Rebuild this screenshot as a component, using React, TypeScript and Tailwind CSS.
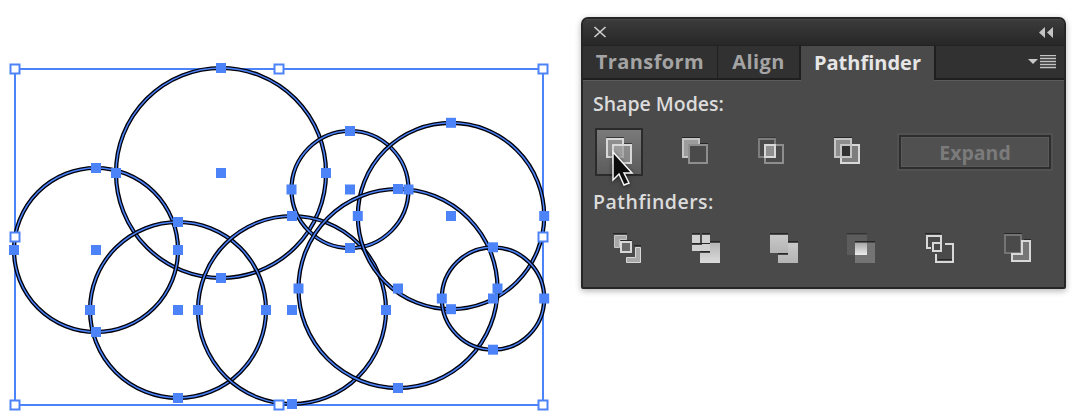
const BLUE = "#4d83f8";

const circles = [
  { cx: 221, cy: 173, r: 105 },
  { cx: 96, cy: 250, r: 82 },
  { cx: 178, cy: 310, r: 88 },
  { cx: 292, cy: 310, r: 94 },
  { cx: 350, cy: 189.5, r: 58.5 },
  { cx: 451, cy: 216, r: 93.2 },
  { cx: 398, cy: 288.5, r: 99.5 },
  { cx: 493, cy: 298.5, r: 51.2 },
];

const handles = [
  [15, 69],
  [279, 69],
  [543, 69],
  [15, 237],
  [543, 237],
  [15, 405],
  [279, 405],
  [543, 405],
];

// artwork on the left: selected circles with their bounding box
const Artboard = () => (
  <svg width="581" height="419" viewBox="0 0 581 419" className="shrink-0">
    <rect x="15" y="69" width="528" height="336" fill="none" stroke={BLUE} strokeWidth="2" />
    {circles.map((c, i) => (
      <g key={i} fill="none">
        <circle cx={c.cx} cy={c.cy} r={c.r} stroke="#000008" strokeWidth="4.2" />
        <circle cx={c.cx} cy={c.cy} r={c.r} stroke={BLUE} strokeWidth="1.5" />
      </g>
    ))}
    {circles.map((c, i) => (
      <g key={i} fill={BLUE}>
        <rect x={c.cx - 5} y={c.cy - 5} width="10" height="10" />
        <rect x={c.cx - 5} y={c.cy - c.r - 5} width="10" height="10" />
        <rect x={c.cx - 5} y={c.cy + c.r - 5} width="10" height="10" />
        <rect x={c.cx - c.r - 5} y={c.cy - 5} width="10" height="10" />
        <rect x={c.cx + c.r - 5} y={c.cy - 5} width="10" height="10" />
      </g>
    ))}
    {handles.map(([x, y], i) => (
      <rect key={i} x={x - 4.5} y={y - 4.5} width="9" height="9" fill="#fff" stroke={BLUE} strokeWidth="2" />
    ))}
  </svg>
);

const Icon = ({ children }: { children: React.ReactNode }) => (
  <svg width="30" height="32" viewBox="0 0 30 32">
    {children}
  </svg>
);

const LIGHT = "#d8d8d8";
const DARK = "#262626";

const UniteIcon = () => (
  <Icon>
    <rect x="2" y="1" width="18" height="1" fill="#3a3a3a" />
    <rect x="3" y="3" width="16" height="18" fill="#8f8f8f" stroke={LIGHT} strokeWidth="2" />
    <rect x="20" y="7" width="8" height="1" fill="#3a3a3a" />
    <rect x="9" y="9" width="18" height="18" fill="#989898" fillOpacity="0.7" stroke={LIGHT} strokeWidth="2" />
    <path d="M10 10h8v10h-8z" fill="#9c9c9c" />
  </Icon>
);

const MinusFrontIcon = () => (
  <Icon>
    <rect x="2" y="1" width="18" height="1" fill={DARK} />
    <rect x="3" y="3" width="16" height="18" fill="#9c9c9c" stroke="#c4c4c4" strokeWidth="2" />
    <rect x="20" y="7" width="8" height="1" fill={DARK} />
    <rect x="9" y="9" width="18" height="18" fill="#4a4a4a" stroke="#8e8e8e" strokeWidth="2" />
  </Icon>
);

const IntersectIcon = () => (
  <Icon>
    <rect x="2" y="1" width="18" height="1" fill="#3a3a3a" />
    <rect x="3" y="3" width="16" height="18" fill="none" stroke="#7d7d7d" strokeWidth="2" />
    <rect x="9" y="9" width="18" height="18" fill="none" stroke="#8e8e8e" strokeWidth="2" />
    <rect x="9" y="9" width="10" height="12" fill="#8f8f8f" stroke={LIGHT} strokeWidth="2" />
  </Icon>
);

const ExcludeIcon = () => (
  <Icon>
    <rect x="2" y="1" width="18" height="1" fill={DARK} />
    <rect x="3" y="3" width="16" height="18" fill="#8d8d8d" stroke="#c4c4c4" strokeWidth="2" />
    <rect x="9" y="9" width="18" height="18" fill="#7d7d7d" stroke={LIGHT} strokeWidth="2" />
    <rect x="9" y="9" width="10" height="12" fill="#303030" stroke="#c4c4c4" strokeWidth="2" />
  </Icon>
);

const DivideIcon = () => (
  <Icon>
    <rect x="1" y="1" width="14" height="1" fill={DARK} />
    <path d="M2.500 15.500V3.500h12v4H7.500v8z" fill="#a8a8a8" stroke="#c8c8c8" strokeWidth="1" />
    <rect x="9" y="8" width="11" height="1" fill={DARK} />
    <rect x="9" y="10" width="10" height="10" fill="#6a6a6a" stroke={LIGHT} strokeWidth="2" />
    <rect x="22" y="13" width="7" height="1" fill={DARK} />
    <path d="M23.500 15.500h5v15h-14v-5h9z" fill="#a8a8a8" stroke={LIGHT} strokeWidth="1" />
  </Icon>
);

const TrimIcon = () => (
  <Icon>
    <defs>
      <linearGradient id="trim" x1="0" y1="0" x2="0" y2="1">
        <stop offset="0" stopColor="#b4b4b4" />
        <stop offset="1" stopColor="#dcdcdc" />
      </linearGradient>
    </defs>
    <rect x="2" y="1" width="8" height="1" fill={DARK} />
    <rect x="12" y="1" width="8" height="1" fill={DARK} />
    <rect x="2" y="3" width="8" height="8" fill="#d0d0d0" />
    <rect x="12" y="3" width="8" height="16" fill="#d0d0d0" />
    <rect x="2" y="11" width="18" height="1" fill={DARK} />
    <rect x="2" y="13" width="18" height="6" fill="#d0d0d0" />
    <rect x="10" y="19" width="10" height="1" fill={DARK} />
    <rect x="20" y="9" width="10" height="1" fill={DARK} />
    <path d="M20 11h10v20H10V21h10z" fill="url(#trim)" />
  </Icon>
);

const MergeIcon = () => (
  <Icon>
    <defs>
      <linearGradient id="merge" x1="0" y1="0" x2="0" y2="1">
        <stop offset="0" stopColor="#c8c8c8" />
        <stop offset="1" stopColor="#b4b4b4" />
      </linearGradient>
    </defs>
    <rect x="2" y="1" width="18" height="1" fill={DARK} />
    <rect x="2" y="3" width="18" height="18" fill="url(#merge)" />
    <rect x="20" y="9" width="10" height="1" fill={DARK} />
    <rect x="10" y="21" width="10" height="1" fill={DARK} />
    <path d="M20 11h10v20H10V23h10z" fill="url(#merge)" />
  </Icon>
);

const CropIcon = () => (
  <Icon>
    <defs>
      <linearGradient id="crop" x1="0" y1="0" x2="0" y2="1">
        <stop offset="0" stopColor="#a8a8a8" />
        <stop offset="1" stopColor="#ececec" />
      </linearGradient>
    </defs>
    <rect x="1" y="1" width="20" height="1" fill="#333" />
    <rect x="1" y="3" width="20" height="20" fill="#5c5c5c" />
    <rect x="9" y="9" width="20" height="1" fill={DARK} />
    <rect x="9" y="11" width="20" height="20" fill="#747474" />
    <rect x="9" y="11" width="12" height="12" fill="url(#crop)" />
  </Icon>
);

const OutlineIcon = () => (
  <Icon>
    <rect x="1" y="1" width="16" height="1" fill={DARK} />
    <path d="M7 16H3V4h14v6" fill="none" stroke={LIGHT} strokeWidth="2" />
    <rect x="9" y="11" width="8" height="8" fill="none" stroke={LIGHT} strokeWidth="2" />
    <path d="M21 12h8v18H12v-8" fill="none" stroke={LIGHT} strokeWidth="2" />
    <rect x="14" y="27" width="14" height="1" fill={DARK} />
  </Icon>
);

const MinusBackIcon = () => (
  <Icon>
    <rect x="2" y="1" width="18" height="1" fill={DARK} />
    <rect x="3" y="3" width="16" height="18" fill="#4a4a4a" stroke="#747474" strokeWidth="2" />
    <rect x="22" y="7" width="7" height="1" fill={DARK} />
    <path d="M20 9h8v20H10v-7h10z" fill="#767676" stroke={LIGHT} strokeWidth="2" />
  </Icon>
);

const Cursor = () => (
  <svg width="24" height="38" viewBox="0 0 24 38" className="absolute left-[13px] top-[20px] drop-shadow-[0_1px_2px_rgba(0,0,0,0.5)]">
    <path d="M3 2v28l6-6 5 11 5-2-5-10h8z" fill="#0c0c0c" stroke="#f4f4f4" strokeWidth="1.500" />
  </svg>
);

const shapeIcons = [MinusFrontIcon, IntersectIcon, ExcludeIcon];
const pathfinderIcons = [DivideIcon, TrimIcon, MergeIcon, CropIcon, OutlineIcon, MinusBackIcon];

const PathfinderPanel = () => (
  <div className="mt-[17px] flex h-[272px] w-[485px] shrink-0 flex-col overflow-hidden rounded-t-[7px] rounded-b-[2px] border-2 border-[#262626] bg-[#4a4a4a] font-['Open_Sans',sans-serif] shadow-[0_2px_6px_rgba(0,0,0,0.3)]">
    {/* title bar */}
    <div className="flex h-[27px] shrink-0 items-center justify-between border-b border-[#222] bg-gradient-to-b from-[#3c3c3c] to-[#272727] pl-[10px] pr-[10px] shadow-[inset_0_1px_0_#484848]">
      <svg width="14" height="12" viewBox="0 0 14 12">
        <path d="M1.500 1l11 10M12.500 1l-11 10" stroke="#d0d0d0" strokeWidth="1.600" />
      </svg>
      <svg width="15" height="11" viewBox="0 0 15 11">
        <path d="M6 0v11L0 5.500zM14 0v11L8 5.500z" fill="#c4c4c4" />
      </svg>
    </div>

    {/* tabs */}
    <div className="relative flex h-[34px] shrink-0 text-[20px] font-bold leading-none">
      <div className="flex w-[135px] items-center justify-center border-r border-b-2 border-[#1f1f1f] bg-[#313131] tracking-[0.4px] text-[#a4a4a4] shadow-[0_1px_0_#5c5c5c]">
        Transform
      </div>
      <div className="flex w-[83px] items-center justify-center border-r-2 border-b-2 border-[#1f1f1f] bg-[#313131] tracking-[0.4px] text-[#a4a4a4] shadow-[0_1px_0_#5c5c5c]">
        Align
      </div>
      <div className="flex w-[133px] items-center justify-center bg-[#4a4a4a] text-[#e6e6e6]">Pathfinder</div>
      <div className="flex flex-1 items-center justify-end gap-[2px] border-l-2 border-b-2 border-[#1f1f1f] bg-[#313131] pr-[8px] shadow-[0_1px_0_#5c5c5c]">
        <svg width="28" height="15" viewBox="0 0 28 15">
          <path d="M0 4h10L5 9z" fill="#c8c8c8" />
          <path d="M12 .5h16M12 3.500h16M12 6.500h16M12 9.500h16M12 12.500h16" stroke="#c4c4c4" strokeWidth="1.500" />
        </svg>
      </div>
    </div>

    {/* shape modes */}
    <div className="flex flex-col px-[10px] pt-[12px]">
      <div className="h-[24px] text-[19.5px] font-semibold leading-[24px] text-[#dcdcdc]">Shape Modes:</div>
      <div className="mt-[12px] flex items-center gap-[28px] pl-[2px]">
        <div className="relative flex h-[48px] w-[48px] items-center justify-center border-2 border-[#2b2b2b] bg-gradient-to-b from-[#7a7a7a] to-[#5c5c5c]">
          <UniteIcon />
          <Cursor />
        </div>
        {shapeIcons.map((ShapeIcon, i) => (
          <div key={i} className="flex h-[48px] w-[48px] items-center justify-center">
            <ShapeIcon />
          </div>
        ))}
        <div className="flex h-[34px] w-[152px] items-center justify-center border-2 border-[#2e2e2e] bg-[#505050] pt-[1px] text-[19.5px] font-bold text-[#7b7b7b] shadow-[inset_0_0_0_1px_#5a5a5a,0_0_0_2px_#515151]">
          Expand
        </div>
      </div>

      <div className="mt-[14px] h-[24px] text-[19.5px] font-semibold leading-[24px] tracking-[0.5px] text-[#dcdcdc]">
        Pathfinders:
      </div>
      <div className="mt-[18px] flex items-center gap-[30px] pl-[10px]">
        {pathfinderIcons.map((PfIcon, i) => (
          <div key={i} className="flex h-[32px] w-[48px] items-center justify-center">
            <PfIcon />
          </div>
        ))}
      </div>
    </div>
  </div>
);

export default function App() {
  return (
    <div className="flex h-[419px] w-[1075px] items-start overflow-hidden bg-white">
      <Artboard />
      <PathfinderPanel />
    </div>
  );
}
